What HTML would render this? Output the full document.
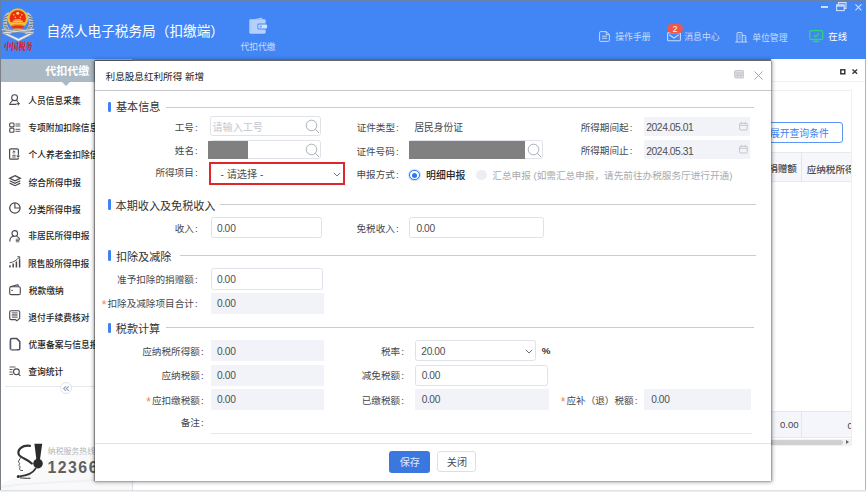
<!DOCTYPE html>
<html lang="zh-CN">
<head>
<meta charset="utf-8">
<title>自然人电子税务局（扣缴端）</title>
<style>
*{box-sizing:border-box;margin:0;padding:0}
html,body{width:866px;height:492px;overflow:hidden;background:#fff}
body{font-family:"Liberation Sans","Noto Sans CJK SC",sans-serif;font-size:10px;color:#333;position:relative}
.abs{position:absolute}
.t{position:absolute;white-space:nowrap;line-height:1;transform:translateY(-43%)}
#win{position:absolute;left:0;top:0;width:866px;height:492px;background:#fff;overflow:hidden}
#hdr{position:absolute;left:0;top:0;width:866px;height:59px;background:#4285f4}
#side{position:absolute;left:1px;top:59px;width:131.5px;height:431px;background:#fff;border-right:1px solid #dcdfe4}
.ic{fill:none;stroke:#4a4a4f;stroke-width:1.1}
#modal{position:absolute;left:95px;top:61px;width:676px;height:419.5px;background:#fff;box-shadow:-1px 0 .8px 0 rgba(0,0,0,.28),0 -1px 0 0 rgba(40,40,40,.5),0 0 0 .5px rgba(60,60,60,.22),1px .3px 1px 0 rgba(0,0,0,.16),0 .3px 4px 1px rgba(0,0,0,.42)}
#mc{position:absolute;left:0;top:0;width:866px;height:492px}
.star{color:#f5853f;font-size:12px;line-height:0;position:relative;top:2.2px;margin-right:1.1px}
.c{font-style:normal;margin-left:1.1px}
.p{font-style:normal;margin:0 -.35px}
</style>
</head>
<body>
<div id="win">

<div id="hdr"></div>
<div class="abs" style="left:0px;top:0px;width:866px;height:1px;background:#6782ab"></div>
<div class="abs" style="left:0px;top:0px;width:1px;height:59px;background:#5f7fb0"></div>
<svg class="abs" style="left:0px;top:0px;overflow:visible" width="38" height="44" viewBox="0 0 38 44" >
<g fill="none" stroke-linecap="round">
<path d="M8.5 14.500C3.500 19 3.500 27 9.500 32" stroke="#bcc2ca" stroke-width="4.400"/>
<path d="M27.500 14.500C32.500 19 32.500 27 26.500 32" stroke="#bcc2ca" stroke-width="4.400"/>
<path d="M7.500 15.500l-3 1.500M6.500 18.500l-3.400 .8M6 21.500l-3.300 .2M6.300 24.500l-3.200-.5M7.300 27.500l-2.900-1.200M9 30l-2.400-1.800" stroke="#5f6873" stroke-width=".9"/>
<path d="M28.500 15.500l3 1.500M29.500 18.500l3.400 .8M30 21.500l3.300 .2M29.700 24.500l3.200-.5M28.700 27.500l2.900-1.200M27 30l2.400-1.800" stroke="#5f6873" stroke-width=".9"/>
</g>
<path d="M2.500 33.200L18.500 41.300 34 33.200 33.500 31.500 18.500 38.500 3 31.500Z" fill="#eef0f3" stroke="#8c949f" stroke-width=".6"/>
<path d="M1.500 30.200L33.500 33.700 33.700 32 1.800 28.800Z" fill="#e4e7eb" stroke="#7d8590" stroke-width=".6"/>
<path d="M34.500 29.800L3 33.900 2.800 32.200 34.200 28.400Z" fill="#f2f4f6" stroke="#7d8590" stroke-width=".6"/>
<circle cx="17.800" cy="18.600" r="10.300" fill="#e3b02c"/>
<circle cx="17.800" cy="18.600" r="9.300" fill="none" stroke="#f4d35a" stroke-width=".7"/>
<circle cx="17.800" cy="18.300" r="8.100" fill="#ee2a10"/>
<path d="M10.800 22.300h14v1.900h-14zM12.800 20.400h10v1.500h-10zM14.500 19.300h6.600v.9h-6.600z" fill="#f0c63a"/>
<path d="M11 25.400h13.600l-1.700 3.100h-10.200z" fill="#e8321f"/>
<path d="M10.500 24.800h14.600" stroke="#f0c63a" stroke-width=".9"/>
<path d="M12.300 28.800h11l-1.500 1.500h-8z" fill="#e3b02c"/>
<circle cx="17.800" cy="13.200" r="1.500" fill="#f9dc6a"/>
<circle cx="13.800" cy="14.800" r=".75" fill="#f9dc6a"/><circle cx="21.800" cy="14.800" r=".75" fill="#f9dc6a"/>
<circle cx="15.200" cy="17.300" r=".75" fill="#f9dc6a"/><circle cx="20.400" cy="17.300" r=".75" fill="#f9dc6a"/>
</svg>
<div id="a1" class="t" style="left:3.6px;top:48.28px;font-size:7.2px;color:#d8202a;font-weight:900;font-family:'Liberation Serif','Noto Serif CJK SC',serif;transform:translateY(-43%) scaleY(1.38) skewX(-8deg);transform-origin:0 50%">中国税务</div>
<div id="a2" class="t" style="left:46.62px;top:30.92px;font-size:13.65px;color:#fff;">自然人电子税务局（扣缴端）</div>
<svg class="abs" style="left:248.5px;top:17.1px;overflow:visible" width="18.6" height="17" viewBox="0 0 18.6 17" ><path d="M3.500 2.600L12.800 .4 13.600 2.600Z" fill="#a9c6fb"/>
<rect x=".3" y="2.300" width="16.400" height="14.400" rx="1.400" fill="#b6cffb"/>
<path d="M2.300 4v11" stroke="#9dbdf8" stroke-width=".7" stroke-dasharray="1 .8"/>
<rect x="8.400" y="6.600" width="10" height="5.800" rx="1.400" fill="#4285f4"/>
<rect x="9.300" y="7.400" width="8.800" height="4.200" rx="1.100" fill="#d2e1fd"/>
<circle cx="11.700" cy="9.500" r="1.100" fill="#4285f4"/><circle cx="11.700" cy="9.500" r=".45" fill="#d2e1fd"/></svg>
<div id="a3" class="t" style="left:240.48px;top:46.75px;font-size:8.8px;color:#cadcfc;">代扣代缴</div>
<svg class="abs" style="left:599.2px;top:31px;overflow:visible" width="11.2" height="11" viewBox="0 0 11.2 11" fill="none" stroke="#c6d9fb" stroke-width="1"><path d="M1.600 .6h5.800l3 3v5.800q0 1-1 1h-7.800q-1 0-1-1v-7.800q0-1 1-1z"/><path d="M7.200 .8v2.800h2.900M3 5.200h5M3 7.300h5"/></svg>
<div id="a4" class="t" style="left:615.25px;top:37.05px;font-size:8.85px;color:#c9dbfc;">操作手册</div>
<svg class="abs" style="left:667.4px;top:31.8px;overflow:visible" width="14" height="9.4" viewBox="0 0 14 9.4" fill="none" stroke="#c6d9fb" stroke-width="1.100"><rect x=".6" y=".6" width="12.800" height="8.200" rx="1"/><path d="M2.200 2.800L7 6 11.800 2.800"/></svg>
<div class="abs" style="left:667.3px;top:23.7px;width:15.7px;height:9.8px;border-radius:4.900px;background:#f1564e"></div>
<div id="a5" class="t" style="left:672.8px;top:28.7px;font-size:8.4px;color:#fff;">2</div>
<div id="a6" class="t" style="left:684.27px;top:37.11px;font-size:8.85px;color:#c9dbfc;">消息中心</div>
<svg class="abs" style="left:734.6px;top:31.8px;overflow:visible" width="12.6" height="10.4" viewBox="0 0 12.6 10.4" fill="none" stroke="#c6d9fb" stroke-width="1"><path d="M2 10V1.200q0-.6.600-.6h4q.6 0 .6.600V10M7.200 3.600h3q.6 0 .6.600V10M.3 10h12"/><path d="M3.600 3h2M3.600 5h2M3.600 7h2M8.800 5.800h.8M8.800 7.800h.8" stroke-width=".8"/></svg>
<div id="a7" class="t" style="left:752.17px;top:37.83px;font-size:8.85px;color:#c9dbfc;">单位管理</div>
<svg class="abs" style="left:809.2px;top:30.2px;overflow:visible" width="14.4" height="12.4" viewBox="0 0 14.4 12.4" fill="none" stroke="#30d27c" stroke-width="1.350"><rect x=".7" y=".7" width="13" height="8.800" rx="1.600"/><path d="M4.200 11.600h6M7.200 9.600v2M4.800 5l1.800 1.700L9.800 3.600"/></svg>
<div id="a8" class="t" style="left:828.37px;top:36.12px;font-size:9.4px;color:#fff;">在线</div>
<div class="abs" style="left:821px;top:6.3px;width:7.4px;height:1.4px;background:#cfe0fd"></div>
<svg class="abs" style="left:836px;top:2px;overflow:visible" width="10.6" height="9.2" viewBox="0 0 10.6 9.2" fill="none" stroke="#cfe0fd" stroke-width="1.100"><path d="M2.500 2.600V.6h7.500V6.400H8"/><rect x=".6" y="2.800" width="7.600" height="5.800"/><path d="M.6 3.900h7.600" stroke-width="1.500"/></svg>
<svg class="abs" style="left:855.2px;top:3.9px;overflow:visible" width="6.8" height="6.8" viewBox="0 0 6.8 6.8" stroke="#cfe0fd" stroke-width="1.100"><path d="M.4 .4L6.400 6.400M6.400 .4L.4 6.400"/></svg>
<div id="side"></div>
<div class="abs" style="left:95px;top:59px;width:676px;height:1px;background:#6680b3"></div>
<div class="abs" style="left:0px;top:59px;width:1px;height:433px;background:#7a7f85"></div>
<div class="abs" style="left:1px;top:59px;width:131px;height:23.2px;background:#abb9c4"></div>
<div class="abs" style="left:61.800px;top:82.200px;width:0;height:0;border-left:4.800px solid transparent;border-right:4.800px solid transparent;border-top:4.800px solid #abb9c4"></div>
<div id="a9" class="t" style="left:45.18px;top:71.43px;font-size:11px;color:#fff;font-weight:700">代扣代缴</div>
<svg class="abs" style="left:9.1px;top:94.3px;overflow:visible" width="12" height="13.5" viewBox="0 0 12 13.5" fill="none" stroke="#4a4a4f" stroke-width="1.1"><circle cx="5.600" cy="3.700" r="2.900"/><path d="M3.600 5.800C3.400 8 1 7.800 .8 10.400H7.500M7.600 5.800c.1 1.200 .6 1.800 1.400 2.200"/><path d="M9.300 8v3.400M7.600 9.700h3.400" stroke-width="1"/></svg>
<div id="a10" class="t" style="left:28.23px;top:101.12px;font-size:8.75px;color:#262626;font-weight:500">人员信息采集</div>
<svg class="abs" style="left:9.1px;top:122px;overflow:visible" width="12" height="13.5" viewBox="0 0 12 13.5" fill="none" stroke="#4a4a4f" stroke-width="1.1"><rect x=".7" y="1" width="4.300" height="3.900" rx="1"/><rect x=".7" y="6.300" width="4.300" height="3.900" rx="1"/><path d="M6.500 2h4.800M6.500 4h4.800M6.500 7.300h4.800M6.500 9.300h4.800" stroke-width=".9"/></svg>
<div id="a11" class="t" style="left:28.29px;top:128.4px;font-size:8.75px;color:#262626;font-weight:500">专项附加扣除信息采集</div>
<svg class="abs" style="left:9.1px;top:148.3px;overflow:visible" width="12" height="13.5" viewBox="0 0 12 13.5" fill="none" stroke="#4a4a4f" stroke-width="1.1"><rect x=".6" y=".8" width="8.800" height="10.400" rx="1.300" stroke-width="1.2"/><path d="M3.300 9h3.400M3.300 7.300h3.400M5 2.800v3M3.600 4.200L5 2.800l1.400 1.400" stroke-width=".9"/><path d="M7 7.200h4.200l-2.100 3z" fill="#3a3a3f" stroke="#fff" stroke-width=".5"/></svg>
<div id="a12" class="t" style="left:28.47px;top:155.1px;font-size:8.75px;color:#262626;font-weight:500">个人养老金扣除信息</div>
<svg class="abs" style="left:9.1px;top:175.2px;overflow:visible" width="12" height="13.5" viewBox="0 0 12 13.5" fill="none" stroke="#4a4a4f" stroke-width="1.1"><path d="M6 .7L11.300 3.300 6 5.900 .7 3.300z" stroke-width="1.300"/><path d="M.7 5.700L6 8.300 11.300 5.700M.7 8.100L6 10.700 11.300 8.100" stroke-width="1.200"/></svg>
<div id="a13" class="t" style="left:28.6px;top:182.68px;font-size:8.75px;color:#262626;font-weight:500">综合所得申报</div>
<svg class="abs" style="left:9.1px;top:202.2px;overflow:visible" width="12" height="13.5" viewBox="0 0 12 13.5" fill="none" stroke="#4a4a4f" stroke-width="1.1"><circle cx="5.900" cy="6" r="5.200" stroke-width="1.250"/><path d="M5.900 1v5h5" stroke-width="1.150"/></svg>
<div id="a14" class="t" style="left:28.25px;top:209.85px;font-size:8.75px;color:#262626;font-weight:500">分类所得申报</div>
<svg class="abs" style="left:9.1px;top:230px;overflow:visible" width="12" height="13.5" viewBox="0 0 12 13.5" fill="none" stroke="#4a4a4f" stroke-width="1.1"><circle cx="5.800" cy="3.400" r="2.800"/><path d="M.8 11.400c0-3.200 1.600-5 4-5.200M7.600 6.300c1.700.5 2.800 1.800 3.100 3.400"/><path d="M6.800 9.200h3.600M6.800 10.500h3.600M6.800 11.800h3.600" stroke-width=".8"/></svg>
<div id="a15" class="t" style="left:28.31px;top:236.4px;font-size:8.75px;color:#262626;font-weight:500">非居民所得申报</div>
<svg class="abs" style="left:9.1px;top:256.3px;overflow:visible" width="12" height="13.5" viewBox="0 0 12 13.5" fill="none" stroke="#4a4a4f" stroke-width="1.1"><path d="M1 11.400V9.200M4.200 11.400V7.400M7.400 11.400V5.400M10.600 11.400V3.200" stroke-width="1.500"/><path d="M.6 6.800C4.500 6.200 7.500 4.500 10.400 1M8.400 .7h2.300v2.300" stroke-width=".9"/></svg>
<div id="a16" class="t" style="left:28.07px;top:263.89px;font-size:8.75px;color:#262626;font-weight:500">限售股所得申报</div>
<svg class="abs" style="left:9.1px;top:284px;overflow:visible" width="12" height="13.5" viewBox="0 0 12 13.5" fill="none" stroke="#4a4a4f" stroke-width="1.1"><path d="M1.200 2.800L8.800 .7l.8 2"/><rect x=".7" y="2.800" width="10.600" height="7.800" rx="1.400"/><path d="M2.200 6.300h1.800" stroke-width=".9"/></svg>
<div id="a17" class="t" style="left:28.68px;top:291.27px;font-size:8.75px;color:#262626;font-weight:500">税款缴纳</div>
<svg class="abs" style="left:9.1px;top:310.3px;overflow:visible" width="12" height="13.5" viewBox="0 0 12 13.5" fill="none" stroke="#4a4a4f" stroke-width="1.1"><path d="M.7 2q0-1.300 1.300-1.300h7.400q1.300 0 1.300 1.300v6.200l-2.800 2.600-1.600-1.200H2q-1.300 0-1.300-1.300z"/><path d="M2.800 2.800h5.800M2.800 4.300h5.800M2.800 5.800h5.800M2.800 7.300h5.800" stroke-width=".8"/></svg>
<div id="a18" class="t" style="left:28.3px;top:317.66px;font-size:8.75px;color:#262626;font-weight:500">退付手续费核对</div>
<svg class="abs" style="left:9.1px;top:337.6px;overflow:visible" width="12" height="13.5" viewBox="0 0 12 13.5" fill="none" stroke="#4a4a4f" stroke-width="1.1"><path d="M1.500 1.900q0-1.300 1.300-1.300h5l3 3v6.800q0 1.300-1.300 1.300H2.800q-1.300 0-1.300-1.300z" stroke-width="1.500" stroke="#4d4d5e"/><path d="M.8 3v8.600h7" stroke="#9a9aa8" stroke-width=".8"/></svg>
<div id="a19" class="t" style="left:28.47px;top:345.1px;font-size:8.75px;color:#262626;font-weight:500">优惠备案与信息报送</div>
<svg class="abs" style="left:9.1px;top:366px;overflow:visible" width="12" height="11.5" viewBox="0 0 12 11.5" fill="none" stroke="#4a4a4f" stroke-width="1.1"><path d="M.5 1h6M.5 3.500h3M.5 6h3M.5 8.400h3.500" stroke-width=".9"/><circle cx="7.400" cy="5.800" r="2.900"/><path d="M9.500 8l1.800 1.800"/></svg>
<div id="a20" class="t" style="left:28.25px;top:372.01px;font-size:8.75px;color:#262626;font-weight:500">查询统计</div>
<div class="abs" style="left:5px;top:386.1px;width:127px;height:1px;background:#e6e8ec"></div>
<div class="abs" style="left:59.8px;top:382px;width:12.4px;height:12.4px;border-radius:50%;border:1px solid #dfe3ec;background:#fff"></div>
<svg class="abs" style="left:62.8px;top:385.6px;overflow:visible" width="6.4" height="5.2" viewBox="0 0 6.4 5.2" fill="none" stroke="#8d99c0" stroke-width="1.100"><path d="M3 .4L.6 2.600 3 4.800M5.800 .4L3.400 2.600 5.800 4.800"/></svg>
<svg class="abs" style="left:1px;top:440px;overflow:visible" width="131" height="50" viewBox="0 0 131 50" ><path d="M40 22C70 8 105 14 131 30V50H0V44C12 40 24 30 40 22Z" fill="#f9f9fa"/><path d="M0 47C40 40 80 44 131 36" fill="none" stroke="#f1f1f3" stroke-width="2"/></svg>
<svg class="abs" style="left:14.6px;top:442.8px;overflow:visible" width="30" height="37" viewBox="0 0 30 37" ><path d="M15 2.800C7.500 1.800 2 6.500 3.800 11.500c1.300 3.400 8.800 4.600 13 9" fill="none" stroke="#333" stroke-width="2.200" stroke-linecap="round"/>
<path d="M19.400 .8h7.800l-2.300 16.400h-3.400z" fill="#2b2b2b"/>
<circle cx="23" cy="20.600" r="4.800" fill="#2b2b2b"/>
<path d="M5.600 14.500c-.8 2-2.600 3.600-2.100 4.600.4.800 1.100.6 1.100 1.400s-1 1.200-.6 2 1.100.6 1.100 1.500-1.100 1.500-.4 2.500c.7 1 1.900 1 3.200 1" fill="none" stroke="#333" stroke-width=".9"/>
<path d="M21 25C18 30 12 32.800 4.500 33.300" fill="none" stroke="#333" stroke-width="1.700"/>
<circle cx="3.300" cy="33.400" r="1.500" fill="#2b2b2b"/>
<path d="M5 34.800c3 .3 6.500.7 10.500.400" fill="none" stroke="#333" stroke-width="1"/></svg>
<div id="a21" class="t" style="left:47.74px;top:451.2px;font-size:7.9px;color:#b4b4b4;">纳税服务热线</div>
<div id="a22" class="t" style="left:47.5px;top:466.6px;font-size:15.8px;color:#606060;font-weight:700;letter-spacing:1.5px">12366</div>
<svg class="abs" style="left:839.5px;top:69.3px;overflow:visible" width="5.6" height="5.6" viewBox="0 0 5.6 5.6" fill="none" stroke="#3a3a3a" stroke-width="1.500"><rect x=".8" y=".8" width="4" height="4"/></svg>
<svg class="abs" style="left:852.2px;top:69.2px;overflow:visible" width="5.6" height="5.2" viewBox="0 0 5.6 5.2" stroke="#3a3a3a" stroke-width="1.500"><path d="M.5 .5L5.100 4.700M5.100 .5L.5 4.700"/></svg>
<div class="abs" style="left:132.5px;top:80.7px;width:732.5px;height:1px;background:#f1f2f4"></div>
<div class="abs" style="left:138px;top:90.3px;width:713.9px;height:356.1px;border:1px solid #eeeff2;background:#fff"></div>
<div class="abs" style="left:700px;top:121.7px;width:143px;height:21.6px;border:1px solid #5c97f7;border-radius:3px;background:#fff"></div>
<div id="a23" class="t" style="right:37.26px;top:133.1px;font-size:9.8px;color:#3a82f6;">展开查询条件</div>
<div class="abs" style="left:139px;top:152.2px;width:712px;height:29.9px;background:#f5f7fa;border-top:1px solid #e6e9ee;border-bottom:1px solid #e6e9ee"></div>
<div class="abs" style="left:801.2px;top:152.2px;width:1px;height:29.9px;background:#e3e6eb"></div>
<div id="a24" class="t" style="right:69.07px;top:168.1px;font-size:9.6px;color:#45484d;font-weight:500">捐赠额</div>
<div class="abs" style="left:800px;top:155px;width:51px;height:26px;overflow:hidden">
<div id="a25" class="t" style="left:6.7px;top:13.7px;font-size:9.6px;color:#45484d;font-weight:500">应纳税所得额</div>
</div>
<div class="abs" style="left:139px;top:410.9px;width:712px;height:27.5px;background:#f4f6fb;border-top:1px solid #e6e9ee;border-bottom:1px solid #e6e9ee"></div>
<div class="abs" style="left:801.2px;top:410.9px;width:1px;height:27.5px;background:#e3e6eb"></div>
<div id="a26" class="t" style="right:67.29px;top:424.1px;font-size:9.6px;color:#444;">0.00</div>
<div class="abs" style="left:840px;top:414px;width:11px;height:22px;overflow:hidden">
<div id="a27" class="t" style="left:7.6px;top:10.7px;font-size:9.6px;color:#444;">0.00</div>
</div>
<div class="abs" style="left:139px;top:439.3px;width:712px;height:6.6px;background:#f1f1f1"></div>
<div class="abs" style="left:150px;top:439.8px;width:693.4px;height:5.6px;background:#d0d0d0;border-radius:2.800px"></div>
<div class="abs" style="left:846.200px;top:439.900px;width:0;height:0;border-top:2.700px solid transparent;border-bottom:2.700px solid transparent;border-left:3.600px solid #666"></div>
<div class="abs" style="left:864.8px;top:59px;width:1px;height:433px;background:#b4b4b4"></div>
<div class="abs" style="left:0px;top:490px;width:866px;height:1px;background:#dfe2e6"></div>
<div class="abs" style="left:0px;top:491px;width:866px;height:1px;background:#eceef1"></div>
<!-- ===== modal ===== -->
<div id="modal"></div>
<div id="mc">
<div id="m1" class="t" style="left:105.55px;top:75.87px;font-size:9.6px;color:#222;">利息股息红利所得 新增</div>
<svg class="abs" style="left:734px;top:70px" width="10.400" height="8.500" viewBox="0 0 11 9"><rect x=".5" y=".5" width="10" height="8" rx="1.6" fill="#dfe0e4" stroke="#b9bbc1" stroke-width=".8"/><path d="M.8 3.1h9.4M.8 5.6h9.400M3.800 3.100v5M7.200 3.100v5" stroke="#b9bbc1" stroke-width=".6"/></svg>
<svg class="abs" style="left:753.5px;top:71.200px" width="9" height="9" viewBox="0 0 9 9" stroke="#9b9ea5" stroke-width=".9"><path d="M.4 .4L8.600 8.600M8.600 .4L.4 8.600"/></svg>
<div class="abs" style="left:94.7px;top:89.6px;width:676.1px;height:1px;background:#c4c7cc"></div>
<div class="abs" style="left:108.3px;top:101.6px;width:2.7px;height:10.7px;background:#3d83f6;border-radius:1.2px"></div>
<div id="m2" class="t" style="left:115.97px;top:107.32px;font-size:11.1px;color:#333;">基本信息</div>
<div class="abs" style="left:166px;top:106.7px;width:588.2px;height:1px;background:#c9ccd1"></div>
<div id="m3" class="t" style="right:668.41px;top:126.92px;font-size:9.6px;color:#45484e;">工号<i class="c">:</i></div>
<div class="abs" style="left:210.2px;top:116.2px;width:111.1px;height:19.5px;border:1px solid #dfe2e8;border-radius:2.5px;background:#fff"></div>
<div id="m4" class="t" style="left:212.5px;top:126.7px;font-size:10.1px;color:#c3c6cd;">请输入工号</div>
<svg class="abs" style="left:305.3px;top:119.4px" width="16" height="16" viewBox="0 0 16 16" fill="none" stroke="#aaadb3" stroke-width="1"><circle cx="6.5" cy="6.5" r="5.3"/><path d="M10.3 10.3L14 14"/></svg>
<div id="m5" class="t" style="right:668.26px;top:150.01px;font-size:9.6px;color:#45484e;">姓名<i class="c">:</i></div>
<div class="abs" style="left:210.2px;top:139.5px;width:111.1px;height:19.5px;border:1px solid #dfe2e8;border-radius:2.5px;background:#fff"></div>
<div class="abs" style="left:208.1px;top:141px;width:39.9px;height:17.6px;background:#808080"></div>
<svg class="abs" style="left:305.3px;top:142.8px" width="16" height="16" viewBox="0 0 16 16" fill="none" stroke="#aaadb3" stroke-width="1"><circle cx="6.5" cy="6.5" r="5.3"/><path d="M10.3 10.3L14 14"/></svg>
<div id="m6" class="t" style="right:668.44px;top:172.34px;font-size:9.6px;color:#45484e;">所得项目<i class="c">:</i></div>
<div class="abs" style="left:208.7px;top:162.2px;width:136.1px;height:22.5px;border:2px solid #e0252d;background:#fff"></div>
<div id="m7" class="t" style="left:220.41px;top:174.44px;font-size:10.2px;color:#4c4f55;">- 请选择 -</div>
<svg class="abs" style="left:333.2px;top:171.6px" width="8" height="5" viewBox="0 0 8 5" fill="none" stroke="#777b83" stroke-width="1"><path d="M.8 .8L4 4 7.2 .8"/></svg>
<div id="m8" class="t" style="right:467.23px;top:126.78px;font-size:9.6px;color:#45484e;">证件类型<i class="c">:</i></div>
<div id="m9" class="t" style="left:414.44px;top:127.07px;font-size:9.7px;color:#45484e;">居民身份证</div>
<div id="m10" class="t" style="right:467.43px;top:150.79px;font-size:9.6px;color:#45484e;">证件号码<i class="c">:</i></div>
<div class="abs" style="left:408.5px;top:139.8px;width:134px;height:19.4px;border:1px solid #dfe2e8;border-radius:2.5px;background:#fff"></div>
<div class="abs" style="left:408.7px;top:141px;width:116.3px;height:17.6px;background:#808080"></div>
<svg class="abs" style="left:527.4px;top:143px" width="16" height="16" viewBox="0 0 16 16" fill="none" stroke="#aaadb3" stroke-width="1"><circle cx="6.5" cy="6.5" r="5.3"/><path d="M10.3 10.3L14 14"/></svg>
<div id="m11" class="t" style="right:467.39px;top:174.45px;font-size:9.6px;color:#45484e;">申报方式<i class="c">:</i></div>
<div class="abs" style="left:409.400px;top:169.700px;width:10.600px;height:10.600px;border-radius:50%;border:1px solid #2b7af5;background:#fff;box-shadow:0 0 1.5px .5px rgba(43,122,245,.45)"></div>
<div class="abs" style="left:412.200px;top:172.500px;width:5px;height:5px;border-radius:50%;background:#2b7af5"></div>
<div id="m12" class="t" style="left:426.09px;top:175.29px;font-size:9.85px;color:#222;font-weight:500">明细申报</div>
<div class="abs" style="left:476px;top:169.700px;width:10.600px;height:10.600px;border-radius:50%;background:#eceef3"></div>
<div id="m13" class="t" style="left:492.28px;top:174.62px;font-size:9.65px;color:#a8aaaf;">汇总申报 (如需汇总申报，请先前往办税服务厅进行开通)</div>
<div id="m14" class="t" style="right:233.63px;top:126.69px;font-size:9.6px;color:#45484e;">所得期间起<i class="c">:</i></div>
<div class="abs" style="left:643.9px;top:116.6px;width:106.3px;height:19.1px;background:#f1f3f8;border-radius:1px"></div>
<div id="m15" class="t" style="left:646.3px;top:127.09px;font-size:10.3px;color:#4c4f55;letter-spacing:-.45px">2024.05.01</div>
<svg class="abs" style="left:739.4px;top:121.7px" width="9" height="9" viewBox="0 0 9 9" fill="none" stroke="#b9bcc3" stroke-width=".8"><rect x=".6" y="1.2" width="7.6" height="6.8" rx=".9"/><path d="M.6 3.3h7.6M2.6 .3v1.6M6.2 .3v1.6"/></svg>
<div id="m16" class="t" style="right:233.64px;top:150.09px;font-size:9.6px;color:#45484e;">所得期间止<i class="c">:</i></div>
<div class="abs" style="left:643.9px;top:140.2px;width:106.3px;height:19px;background:#f1f3f8;border-radius:1px"></div>
<div id="m17" class="t" style="left:646.32px;top:150.89px;font-size:10.3px;color:#4c4f55;letter-spacing:-.45px">2024.05.31</div>
<svg class="abs" style="left:739.4px;top:145.3px" width="9" height="9" viewBox="0 0 9 9" fill="none" stroke="#b9bcc3" stroke-width=".8"><rect x=".6" y="1.2" width="7.6" height="6.8" rx=".9"/><path d="M.6 3.3h7.6M2.6 .3v1.6M6.2 .3v1.6"/></svg>
<div class="abs" style="left:108.3px;top:198.9px;width:2.7px;height:10.9px;background:#3d83f6;border-radius:1.2px"></div>
<div id="m18" class="t" style="left:115.6px;top:205.78px;font-size:11.1px;color:#333;">本期收入及免税收入</div>
<div class="abs" style="left:219.5px;top:204.4px;width:536.5px;height:1px;background:#c9ccd1"></div>
<div id="m19" class="t" style="right:668.37px;top:227.74px;font-size:9.6px;color:#45484e;">收入<i class="c">:</i></div>
<div class="abs" style="left:210.6px;top:216.7px;width:111.5px;height:21.6px;border:1px solid #dfe2e8;border-radius:2.5px;background:#fff"></div>
<div id="m20" class="t" style="left:217.09px;top:227.91px;font-size:10.2px;color:#4c4f55;letter-spacing:-.15px">0<i class="p">.</i>00</div>
<div id="m21" class="t" style="right:467.36px;top:227.7px;font-size:9.6px;color:#45484e;">免税收入<i class="c">:</i></div>
<div class="abs" style="left:409px;top:216.7px;width:135px;height:21.6px;border:1px solid #dfe2e8;border-radius:2.5px;background:#fff"></div>
<div id="m22" class="t" style="left:416.49px;top:227.91px;font-size:10.2px;color:#4c4f55;letter-spacing:-.15px">0<i class="p">.</i>00</div>
<div class="abs" style="left:108.3px;top:250.2px;width:2.7px;height:10.9px;background:#3d83f6;border-radius:1.2px"></div>
<div id="m23" class="t" style="left:115.93px;top:256.73px;font-size:11.1px;color:#333;">扣除及减除</div>
<div class="abs" style="left:180.1px;top:255.2px;width:575.9px;height:1px;background:#c9ccd1"></div>
<div id="m24" class="t" style="right:668.42px;top:279.04px;font-size:9.6px;color:#45484e;">准予扣除的捐赠额<i class="c">:</i></div>
<div class="abs" style="left:210.6px;top:268.3px;width:112px;height:21.3px;border:1px solid #dfe2e8;border-radius:2.5px;background:#fff"></div>
<div id="m25" class="t" style="left:217.09px;top:279.01px;font-size:10.2px;color:#4c4f55;letter-spacing:-.15px">0<i class="p">.</i>00</div>
<div id="m26" class="t" style="right:668.42px;top:302.82px;font-size:9.6px;color:#45484e;"><span class="star">*</span>扣除及减除项目合计<i class="c">:</i></div>
<div class="abs" style="left:210.6px;top:292.9px;width:113.8px;height:21.4px;background:#f1f3f8;border-radius:1px"></div>
<div id="m27" class="t" style="left:217.12px;top:303.01px;font-size:10.2px;color:#4c4f55;letter-spacing:-.15px">0<i class="p">.</i>00</div>
<div class="abs" style="left:108.3px;top:322.6px;width:2.7px;height:10.7px;background:#3d83f6;border-radius:1.2px"></div>
<div id="m28" class="t" style="left:115.82px;top:328.7px;font-size:11.1px;color:#333;">税款计算</div>
<div class="abs" style="left:166.1px;top:327.4px;width:588.1px;height:1px;background:#c9ccd1"></div>
<div id="m29" class="t" style="right:662.41px;top:351.19px;font-size:9.6px;color:#45484e;">应纳税所得额<i class="c">:</i></div>
<div class="abs" style="left:210.6px;top:339.9px;width:113.8px;height:21.3px;background:#f1f3f8;border-radius:1px"></div>
<div id="m30" class="t" style="left:217.12px;top:350.91px;font-size:10.2px;color:#4c4f55;letter-spacing:-.15px">0<i class="p">.</i>00</div>
<div id="m31" class="t" style="right:662.39px;top:375.48px;font-size:9.6px;color:#45484e;">应纳税额<i class="c">:</i></div>
<div class="abs" style="left:210.6px;top:364.5px;width:113.8px;height:21.1px;background:#f1f3f8;border-radius:1px"></div>
<div id="m32" class="t" style="left:217.12px;top:375.31px;font-size:10.2px;color:#4c4f55;letter-spacing:-.15px">0<i class="p">.</i>00</div>
<div id="m33" class="t" style="right:662.39px;top:399.89px;font-size:9.6px;color:#45484e;"><span class="star">*</span>应扣缴税额<i class="c">:</i></div>
<div class="abs" style="left:210.6px;top:388.9px;width:113.8px;height:21.4px;background:#f1f3f8;border-radius:1px"></div>
<div id="m34" class="t" style="left:217.12px;top:399.21px;font-size:10.2px;color:#4c4f55;letter-spacing:-.15px">0<i class="p">.</i>00</div>
<div id="m35" class="t" style="right:662.4px;top:422.19px;font-size:9.6px;color:#45484e;">备注<i class="c">:</i></div>
<div class="abs" style="left:210.6px;top:432.5px;width:541.6px;height:1px;background:#e4e6eb"></div>
<div id="m36" class="t" style="right:462.08px;top:351.12px;font-size:9.6px;color:#45484e;">税率<i class="c">:</i></div>
<div class="abs" style="left:414.8px;top:340.4px;width:121px;height:20.3px;border:1px solid #dfe2e8;border-radius:2.5px;background:#fff"></div>
<div id="m37" class="t" style="left:421.14px;top:351.13px;font-size:10.2px;color:#4c4f55;letter-spacing:-.15px">20<i class="p">.</i>00</div>
<svg class="abs" style="left:525px;top:348.9px" width="8" height="5" viewBox="0 0 8 5" fill="none" stroke="#6c7078" stroke-width="1"><path d="M.8 .8L4 4 7.2 .8"/></svg>
<div id="m38" class="t" style="left:541.81px;top:350.3px;font-size:9.8px;color:#333;font-weight:700">%</div>
<div id="m39" class="t" style="right:462.13px;top:375.47px;font-size:9.6px;color:#45484e;">减免税额<i class="c">:</i></div>
<div class="abs" style="left:414.8px;top:364.5px;width:133.7px;height:21.1px;border:1px solid #dfe2e8;border-radius:2.5px;background:#fff"></div>
<div id="m40" class="t" style="left:421.74px;top:375.31px;font-size:10.2px;color:#4c4f55;letter-spacing:-.15px">0<i class="p">.</i>00</div>
<div id="m41" class="t" style="right:462.1px;top:399.86px;font-size:9.6px;color:#45484e;">已缴税额<i class="c">:</i></div>
<div class="abs" style="left:414.8px;top:388.9px;width:134.2px;height:21.4px;background:#f1f3f8;border-radius:1px"></div>
<div id="m42" class="t" style="left:421.75px;top:399.21px;font-size:10.2px;color:#4c4f55;letter-spacing:-.15px">0<i class="p">.</i>00</div>
<div id="m43" class="t" style="right:228.58px;top:399.88px;font-size:9.6px;color:#45484e;"><span class="star">*</span>应补（退）税额<i class="c">:</i></div>
<div class="abs" style="left:644.2px;top:388.9px;width:106.8px;height:21.4px;background:#f1f3f8;border-radius:1px"></div>
<div id="m44" class="t" style="left:651.26px;top:399.21px;font-size:10.2px;color:#4c4f55;letter-spacing:-.15px">0<i class="p">.</i>00</div>
<div class="abs" style="left:94.7px;top:442.6px;width:676.1px;height:1px;background:#dfe2e7"></div>
<div class="abs" style="left:388.9px;top:450.9px;width:41px;height:21.8px;border-radius:3px;background:#3a78e0"></div>
<div id="m45" class="t" style="left:399.78px;top:462.21px;font-size:10.1px;color:#dce8ff;">保存</div>
<div class="abs" style="left:437.4px;top:451.2px;width:38.8px;height:21.2px;border-radius:3px;background:#fff;border:1px solid #dcdfe5"></div>
<div id="m46" class="t" style="left:446.86px;top:462.19px;font-size:10.1px;color:#4a4d52;">关闭</div>
</div>

</div>
</body>
</html>
